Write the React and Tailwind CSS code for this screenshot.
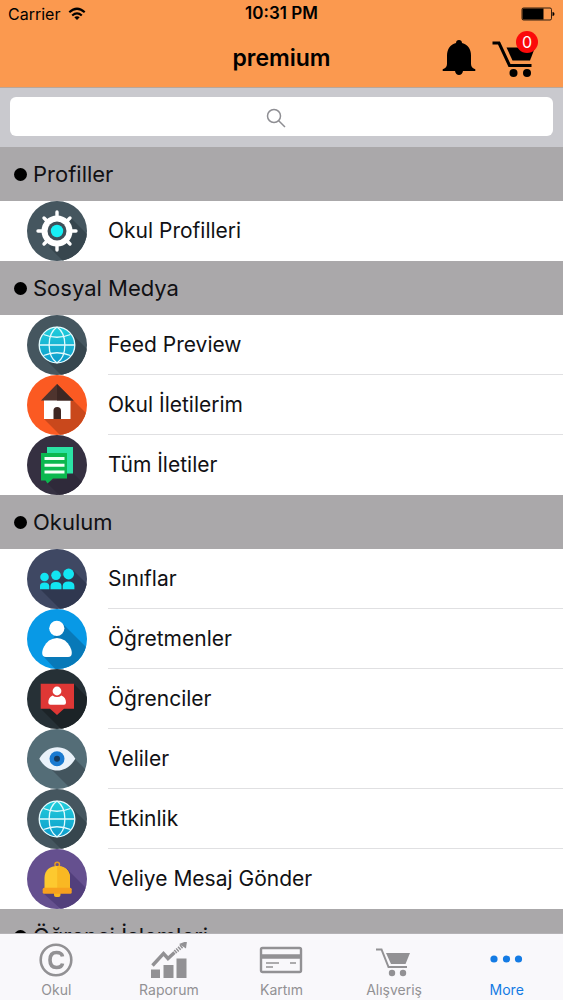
import { useState } from 'react';

const MENU = [
  {
    title: 'Profiller',
    items: [{ label: 'Okul Profilleri', icon: GearIcon }],
  },
  {
    title: 'Sosyal Medya',
    items: [
      { label: 'Feed Preview',    icon: GlobeIcon },
      { label: 'Okul İletilerim', icon: HouseIcon },
      { label: 'Tüm İletiler',    icon: ChatIcon  },
    ],
  },
  {
    title: 'Okulum',
    items: [
      { label: 'Sınıflar',            icon: GroupIcon   },
      { label: 'Öğretmenler',         icon: TeacherIcon },
      { label: 'Öğrenciler',          icon: StudentIcon },
      { label: 'Veliler',             icon: EyeIcon     },
      { label: 'Etkinlik',            icon: GlobeIcon   },
      { label: 'Veliye Mesaj Gönder', icon: BellIcon    },
    ],
  },
  {
    title: 'Öğrenci İşlemleri',
    items: [],
  },
];

const TABS = [
  { label: 'Okul',      icon: CopyrightTab },
  { label: 'Raporum',   icon: ChartTab     },
  { label: 'Kartım',    icon: CardTab      },
  { label: 'Alışveriş', icon: CartTab      },
  { label: 'More',      icon: MoreTab      },
];

// Round badge with a long shadow, cut off at the circle's edge
function Disc({ color, shade, shadow, children }) {
  return (
    <svg viewBox="0 0 60 60" className="size-15 shrink-0 rounded-full overflow-hidden" aria-hidden="true">
      <rect width="60" height="60" fill={color} />
      <path d={shadow} fill={shade} />
      {children}
    </svg>
  );
}

function GearIcon() {
  return (
    <Disc color="#45565f" shade="#37464e" shadow="M44 17 62 35V62H38L22 46Z">
      <g stroke="#fff" strokeWidth="3.400" strokeLinecap="round">
        <path d="M30 11V49M11 30H49M17 17 43 43M43 17 17 43" />
      </g>
      <circle cx="30" cy="30" r="15.500" fill="#fff" />
      <circle cx="30" cy="30" r="9.500" fill="#3f4f58" />
      <circle cx="30" cy="30" r="6.200" fill="#18f0f5" />
    </Disc>
  );
}

function GlobeIcon() {
  return (
    <Disc color="#45565f" shade="#37464e" shadow="M43 17 62 36V62H36L17 43Z">
      <defs>
        <linearGradient id="globe" x1="0" y1="0" x2="0" y2="1">
          <stop offset="0" stopColor="#22cfdc" />
          <stop offset="1" stopColor="#0d9bcb" />
        </linearGradient>
      </defs>
      <circle cx="30" cy="30" r="18" fill="url(#globe)" />
      <g fill="none" stroke="#e4fafd" strokeWidth="1.300">
        <circle cx="30" cy="30" r="17.800" />
        <path d="M30 12C19.500 19 19.500 41 30 48M30 12C40.500 19 40.500 41 30 48" />
        <path d="M12 30H48M16.500 19.500Q30 25 43.500 19.500M16.500 40.500Q30 35 43.500 40.500" />
      </g>
    </Disc>
  );
}

function HouseIcon() {
  return (
    <Disc color="#fb5a22" shade="#c9481c" shadow="M46 25 62 41V62H35L17 44Z">
      <path d="M17 23H43.500V44H17Z" fill="#fff" />
      <path d="M30 9 14 25.500H46.500Z" fill="#4e342e" />
      <path d="M30 9V25.500H46.500Z" fill="#3c2723" />
      <path d="M26.500 44V35.500Q26.500 32 30.200 32T34 35.500V44Z" fill="#3e2723" />
    </Disc>
  );
}

function ChatIcon() {
  return (
    <Disc color="#353041" shade="#2f2a3a" shadow="M46 38 62 54V62H34L20 48Z">
      <path d="M20 12H46V38.500H20Z" fill="#2be3a5" />
      <path d="M14 18H40V43.500H26L20.500 48.500 18.500 45.500H14Z" fill="#0bb84f" />
      <path d="M17.500 23.500H37.500M17.500 30.300H37.500M17.500 37H37.500" stroke="#f2fff7" strokeWidth="3" />
    </Disc>
  );
}

function GroupIcon() {
  return (
    <Disc color="#3f4863" shade="#303850" shadow="M46 21 62 37V62H35L13 40Z">
      <g fill="#12e5f2">
        <circle cx="17.500" cy="28" r="4.300" />
        <circle cx="29" cy="26.300" r="4.800" />
        <circle cx="41.600" cy="25" r="5.400" />
        <path d="M13 40.300V37Q13 33.500 17.500 33.500T22.300 37V40.300Z" />
        <path d="M23.500 40.300V37Q23.500 33 29 33T34.500 37V40.300Z" />
        <path d="M35.700 40.300V37Q35.700 32.500 41.500 32.500T47.400 37V40.300Z" />
      </g>
    </Disc>
  );
}

function TeacherIcon() {
  return (
    <Disc color="#0899e6" shade="#0879b8" shadow="M35 14 62 41V62H30L16 47Z">
      <circle cx="29.800" cy="19.300" r="7.600" fill="#fff" />
      <path d="M22 31.500Q30 26.500 38 31.500C42 35 44.800 40 44.800 44Q44.800 48 41 48H19Q15.200 48 15.200 44C15.200 40 18 35 22 31.500Z" fill="#fff" />
    </Disc>
  );
}

function StudentIcon() {
  return (
    <Disc color="#263036" shade="#1c2327" shadow="M47 15 62 30V62H36L14 40Z">
      <path d="M13.700 14.700H47V39.700H37L30 46 23 39.700H13.700Z" fill="#df3735" />
      <circle cx="30" cy="22" r="4.400" fill="#fff" />
      <path d="M25.500 26.500Q30 29.500 34.500 26.500 39 28.500 39 33.500 39 35.800 37 35.800H23.500Q21.300 35.800 21.300 33.500 21.300 28.500 25.500 26.500Z" fill="#fff" />
    </Disc>
  );
}

function EyeIcon() {
  return (
    <Disc color="#546d77" shade="#43555e" shadow="M48 30 62 44V62H46L22 38Z">
      <path d="M12.300 29.800C21 14.500 39.500 14.500 48.300 29.800 39.500 45.500 21 45.500 12.300 29.800Z" fill="#eaf2fa" />
      <circle cx="30" cy="29.800" r="7.500" fill="#1a7ad0" />
      <circle cx="30" cy="29.800" r="3" fill="#173a5c" />
    </Disc>
  );
}

function BellIcon() {
  return (
    <Disc color="#65508f" shade="#523f7c" shadow="M40 20 62 42V62H36L16 44Z">
      <circle cx="30.200" cy="15.500" r="2.300" fill="none" stroke="#e89a1f" strokeWidth="1.400" />
      <rect x="27" y="42" width="6.500" height="6" rx="2" fill="#f9b61f" />
      <path d="M17.500 39V29C17.500 21 23 17 30.200 17S43 21 43 29V39Z" fill="#fdc92f" />
      <path d="M30.200 17C37.500 17 43 21 43 29V39H30.200Z" fill="#f9b823" />
      <rect x="15.700" y="38.700" width="29" height="6" rx="1.500" fill="#f7a01e" />
    </Disc>
  );
}

function CopyrightTab() {
  return (
    <svg viewBox="0 0 36 36" className="size-9" fill="none" stroke="currentColor" aria-hidden="true">
      <circle cx="18" cy="18" r="15.300" strokeWidth="2.600" />
      <path d="M24.500 14.500C24 11.500 21.500 10.500 18.500 10.500 14 10.500 12 13 12 18S14 25.500 18.500 25.500C21.500 25.500 24 24.500 24.500 21.500" strokeWidth="3.600" />
    </svg>
  );
}

function ChartTab() {
  return (
    <svg viewBox="0 0 36 36" className="size-9" aria-hidden="true">
      <path d="M0 27.500H9V36H0ZM12.500 23H22.500V36H12.500ZM25.500 16.500H35.500V36H25.500Z" fill="currentColor" />
      <path d="M1.500 23.500 12.500 11.500 17 16.500 23.500 10.500" fill="none" stroke="currentColor" strokeWidth="3.400" />
      <path d="M24 10 31 4" fill="none" stroke="currentColor" strokeWidth="4" strokeDasharray="1.500 1" />
      <path d="M28 2 36 -1 35 6.500Z" fill="currentColor" />
    </svg>
  );
}

function CardTab() {
  return (
    <svg viewBox="0 0 44 36" className="h-9 w-11" fill="none" stroke="currentColor" aria-hidden="true">
      <rect x="2" y="6" width="40" height="24" rx="1.500" strokeWidth="2.400" />
      <path d="M2 14.500H42" strokeWidth="4.500" />
      <path d="M7 21H20M7 25H14M31 21H37" strokeWidth="1.600" />
    </svg>
  );
}

function CartTab() {
  return (
    <svg viewBox="0 0 36 36" className="size-9" aria-hidden="true">
      <path d="M0 7.500H5.500L12.500 25H31" fill="none" stroke="currentColor" strokeWidth="2" />
      <path d="M10 11H34L29.500 22H15Z" fill="currentColor" />
      <circle cx="16" cy="31" r="3.200" fill="currentColor" />
      <circle cx="27" cy="31" r="3.200" fill="currentColor" />
    </svg>
  );
}

function MoreTab() {
  return (
    <svg viewBox="0 0 36 36" className="size-9" fill="currentColor" aria-hidden="true">
      <circle cx="5" cy="17" r="3.600" />
      <circle cx="17.500" cy="17" r="3.600" />
      <circle cx="29.500" cy="17" r="3.600" />
    </svg>
  );
}

function StatusBar() {
  return (
    <div className="grid grid-cols-[1fr_auto_1fr] items-center h-7 px-2 text-base">
      <span className="flex items-center gap-2">
        Carrier
        <svg viewBox="0 0 18 14" className="w-[18px] h-[14px]" aria-hidden="true">
          <g fill="none" stroke="currentColor" strokeWidth="2.200">
            <path d="M1.300 5.300Q9-1.800 16.700 5.300" />
            <path d="M4.200 8.500Q9 4.300 13.800 8.500" />
          </g>
          <path d="M6.300 10.300Q9 8.300 11.700 10.300L9 13Z" fill="currentColor" />
        </svg>
      </span>
      <span className="text-[17px] font-semibold">10:31 PM</span>
      <svg viewBox="0 0 34 14" className="w-[34px] h-[14px] justify-self-end" aria-hidden="true">
        <rect x="1" y="1" width="29.500" height="12" rx="1.500" fill="none" stroke="currentColor" strokeWidth=".800" />
        <path d="M1.500 1.500H22.500V12.500H1.500Z" fill="currentColor" />
        <path d="M31.500 5Q33.500 5 33.500 7T31.500 9Z" fill="currentColor" />
      </svg>
    </div>
  );
}

function NavBar({ cartCount }) {
  return (
    <div className="grid grid-cols-[1fr_auto_1fr] items-center h-[59px]">
      <h1 className="col-start-2 text-[23px] leading-7 font-semibold">premium</h1>
      <div className="flex items-center justify-end gap-4 pr-[25px]">
        <button type="button" aria-label="Bildirimler">
          <svg viewBox="0 0 34 36" className="w-[34px] h-9" fill="currentColor" aria-hidden="true">
            <path d="M17 0C18.800 0 20 1.200 20 3 26 4.500 29 9.500 29 15.500V24C29 27 31 28.500 33.300 29.300V31H21C20.500 33.500 19 35 17 35S13.500 33.500 13 31H.700V29.300C3 28.500 5 27 5 24V15.500C5 9.500 8 4.500 14 3 14 1.200 15.200 0 17 0Z" />
          </svg>
        </button>
        <button type="button" aria-label="Sepet" className="relative">
          <svg viewBox="0 0 46 38" className="w-[46px] h-[38px]" aria-hidden="true">
            <path d="M.500 4H7L17.500 26.500H39.500" fill="none" stroke="currentColor" strokeWidth="3" />
            <path d="M14.500 8.500H43L38 21.500H20.500Z" fill="currentColor" />
            <circle cx="21.500" cy="34" r="4" fill="currentColor" />
            <circle cx="35" cy="34" r="4" fill="currentColor" />
          </svg>
          <span className="absolute -top-2 right-0 flex items-center justify-center size-[22px] rounded-full bg-[#fb0a0a] text-white text-base leading-none">
            {cartCount}
          </span>
        </button>
      </div>
    </div>
  );
}

function SearchBar() {
  const [query, setQuery] = useState('');

  return (
    <div className="relative h-15 px-[10px] pt-[9px] bg-[#c9c9ce] border-t border-[#b9a79b]">
      <input
        type="search"
        aria-label="Ara"
        value={query}
        onChange={(e) => setQuery(e.target.value)}
        className="block w-full h-[39px] px-4 rounded-md bg-white text-lg outline-none"
      />
      {!query && (
        <svg
          viewBox="0 0 20 20"
          className="absolute top-5 left-1/2 -translate-x-4 size-5 pointer-events-none"
          fill="none"
          stroke="#8e8e93"
          strokeWidth="1.500"
          aria-hidden="true"
        >
          <circle cx="8" cy="8" r="6.500" />
          <path d="M12.700 12.700 19 19" />
        </svg>
      )}
    </div>
  );
}

function MenuSection({ title, items }) {
  return (
    <section>
      <h2 className="flex items-center gap-[6px] h-[54px] pl-[14px] bg-[#aaa8aa] text-[22px] leading-7">
        <span className="size-[13px] rounded-full bg-black" />
        {title}
      </h2>
      <ul>
        {items.map(({ label, icon: Icon }, i) => (
          <li key={label}>
            <a href="#" className="flex items-center h-15 pl-[27px] gap-[21px]">
              <Icon />
              <span
                className={`flex items-center flex-1 h-full text-[21px] leading-7 border-b ${
                  i < items.length - 1 ? 'border-[#e0e0e2]' : 'border-transparent'
                }`}
              >
                {label}
              </span>
            </a>
          </li>
        ))}
      </ul>
    </section>
  );
}

export default function App() {
  const [active, setActive] = useState('More');

  return (
    <div className="flex flex-col h-screen bg-white text-[#111114] font-['Inter',sans-serif]">
      <header className="shrink-0 bg-[#fb994f] text-black">
        <StatusBar />
        <NavBar cartCount={0} />
      </header>

      <main className="flex-1 min-h-0 overflow-y-auto [scrollbar-width:none]">
        <SearchBar />
        {MENU.map((section) => (
          <MenuSection key={section.title} {...section} />
        ))}
      </main>

      <nav className="grid grid-cols-5 shrink-0 h-[67px] pt-2 bg-[#f9f8fb] border-t border-[#b5b3b6]">
        {TABS.map(({ label, icon: Icon }) => (
          <button
            key={label}
            type="button"
            onClick={() => setActive(label)}
            className={`flex flex-col items-center gap-[3px] text-[14px] leading-[18px] ${
              active === label ? 'text-[#147be4]' : 'text-[#929194]'
            }`}
          >
            <Icon />
            {label}
          </button>
        ))}
      </nav>
    </div>
  );
}
